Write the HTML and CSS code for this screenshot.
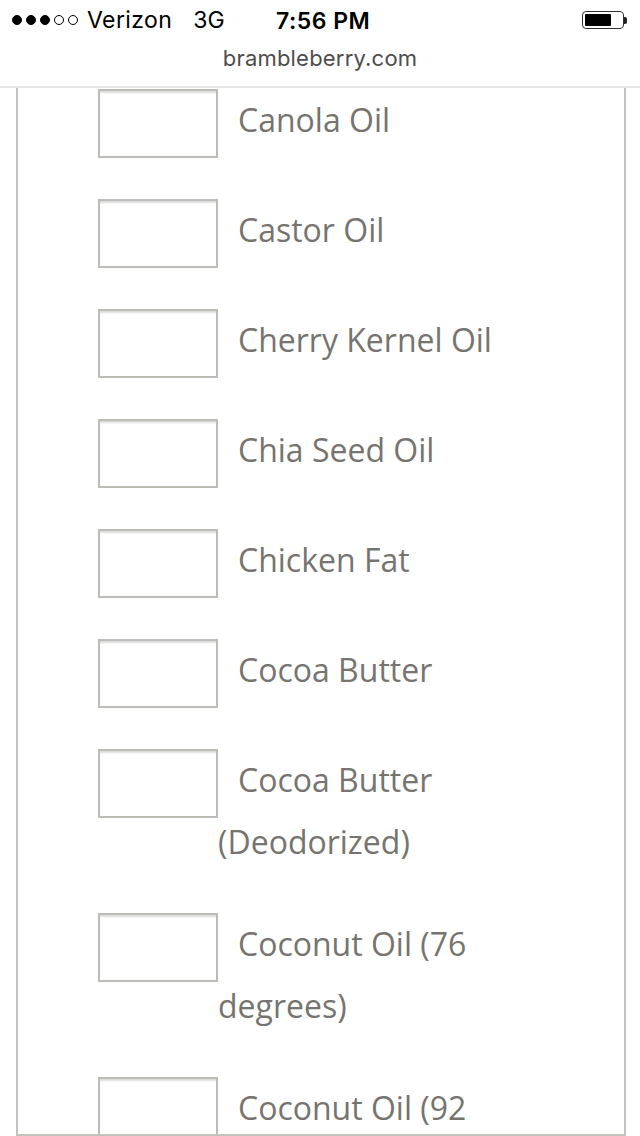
FILE: index.html
```html
<!DOCTYPE html>
<html>
<head>
<meta charset="utf-8">
<link rel="stylesheet" href="styles.css">
</head>
<body>
<header class="chrome">
  <div class="status">
    <div class="carrier">
      <span class="dots"><i class="dot on"></i><i class="dot on"></i><i class="dot on"></i><i class="dot"></i><i class="dot"></i></span>
      <span class="name">Verizon</span>
      <span class="net">3G</span>
    </div>
    <div class="time">7:56 PM</div>
    <div class="battery"><span class="cell"><span class="fill"></span></span><span class="nub"></span></div>
  </div>
  <div class="url">brambleberry.com</div>
</header>
<main class="panel">
  <ul class="oils">
    <li class="oil"><span class="qty"></span><span class="label">Canola Oil</span></li>
    <li class="oil"><span class="qty"></span><span class="label">Castor Oil</span></li>
    <li class="oil"><span class="qty"></span><span class="label">Cherry Kernel Oil</span></li>
    <li class="oil"><span class="qty"></span><span class="label">Chia Seed Oil</span></li>
    <li class="oil"><span class="qty"></span><span class="label">Chicken Fat</span></li>
    <li class="oil"><span class="qty"></span><span class="label">Cocoa Butter</span></li>
    <li class="oil"><span class="qty"></span><span class="label">Cocoa Butter (Deodorized)</span></li>
    <li class="oil"><span class="qty"></span><span class="label">Coconut Oil (76 degrees)</span></li>
    <li class="oil"><span class="qty"></span><span class="label">Coconut Oil (92 degrees)</span></li>
  </ul>
</main>
</body>
</html>
```
FILE: styles.css
```css
* { box-sizing: border-box; }
html, body { margin: 0; padding: 0; background: #fff; }
body { width: 640px; height: 1136px; overflow: hidden; }

.chrome {
  height: 88px;
  border-bottom: 2px solid #e6e6e6;
  font-family: Inter, "Liberation Sans", sans-serif;
}
.status {
  height: 40px;
  display: flex;
  align-items: center;
  justify-content: space-between;
  padding: 0 13px 0 12px;
  color: #000;
  font-size: 23px;
  position: relative;
}
.carrier { display: flex; align-items: center; }
.dots { display: flex; gap: 4px; margin-right: 9px; }
.dot {
  display: block;
  width: 10px; height: 10px;
  border-radius: 50%;
  border: 1px solid #000;
}
.dot.on { background: #000; }
.name { letter-spacing: 0.4px; }
.net { margin-left: 21px; }
.time {
  position: absolute;
  left: 276px;
  top: 7px;
  font-size: 23px;
  font-weight: 600;
  letter-spacing: 0.5px;
}
.battery { display: flex; align-items: center; }
.cell {
  width: 42px; height: 18px;
  border: 1.5px solid #333;
  border-radius: 4px;
  padding: 2px;
  display: flex;
}
.fill { width: 26px; background: #000; border-radius: 1px; }
.nub { width: 3px; height: 7px; background: #222; border-radius: 0 2px 2px 0; }

.url {
  height: 46px;
  text-align: center;
  font-size: 22px;
  color: #4d4d4d;
  line-height: 36px;
  letter-spacing: 0.2px;
}

.panel {
  margin: 0 14px 0 16px;
  height: 1048px;
  border: 2px solid #c2c2be;
  border-top: 0;
  overflow: hidden;
}
.oils {
  list-style: none;
  margin: 0;
  padding: 1px 0 0 80px;
}
.oil {
  display: flex;
  align-items: flex-start;
  margin-bottom: 40px;
}
.qty {
  flex: 0 0 120px;
  height: 69px;
  margin-bottom: 1px;
  border: 2px solid #bdbdb8;
  background: #fff;
  box-shadow: inset 0 3px 2px -1px #dcdcdc;
}
.label {
  flex: 1;
  font-family: "Open Sans", "Liberation Sans", sans-serif;
  font-size: 32px;
  line-height: 62px;
  color: #76746f;
  text-indent: 20px;
  padding-right: 30px;
}
```
